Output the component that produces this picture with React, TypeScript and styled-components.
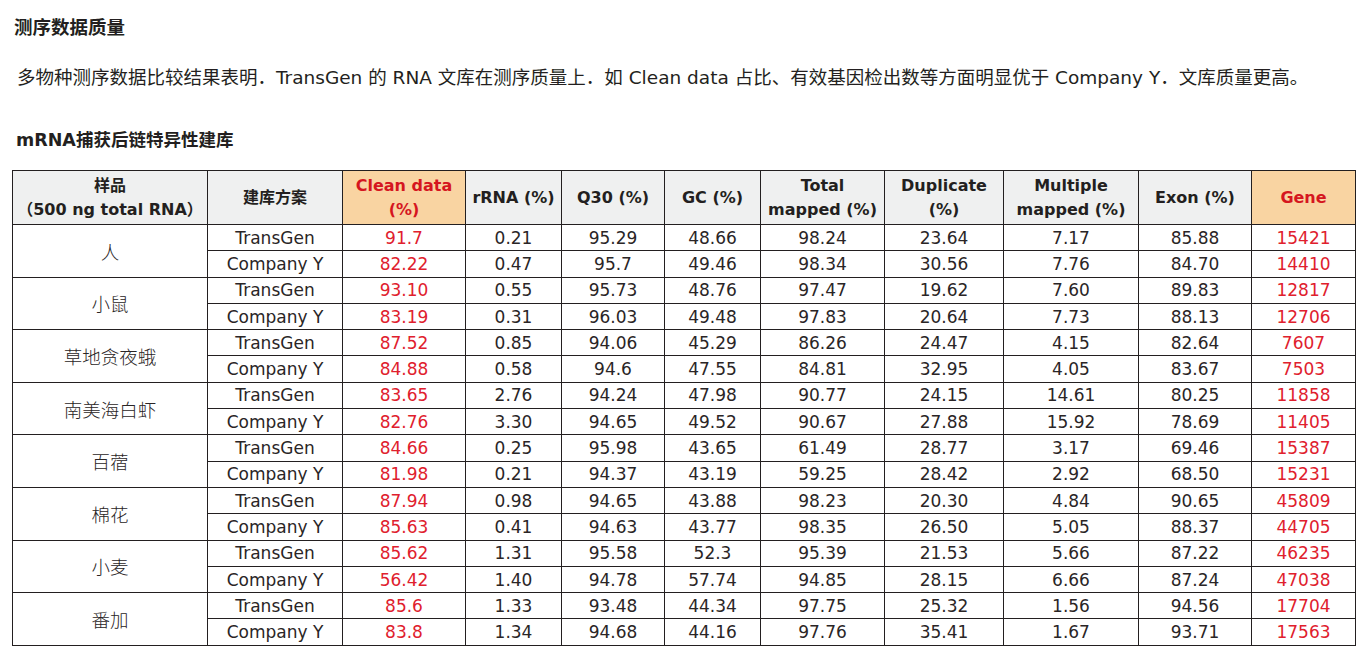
import React from "react";
import styled, { createGlobalStyle } from "styled-components";

const GlobalStyle = createGlobalStyle`
  html, body { margin: 0; padding: 0; background: #ffffff; }
  body { font-family: "DejaVu Sans", "Noto Sans CJK SC", sans-serif; color: #231f20; }
`;

const Page = styled.div`
  width: 1368px;
  height: 664px;
  box-sizing: border-box;
  padding: 14px 0 0 12px;
  display: flex;
  flex-direction: column;
  overflow: hidden;
`;

const Title = styled.h2`
  margin: 0 0 0 2px;
  font-family: "Noto Sans CJK SC", sans-serif;
  font-size: 18.5px;
  line-height: 24px;
  font-weight: 700;
  color: #231f20;
`;

const Paragraph = styled.p`
  margin: 28px 0 0 5px;
  font-family: "DejaVu Sans", "Noto Sans CJK SC", sans-serif;
  font-size: 18.5px;
  line-height: 24px;
  font-weight: 400;
  color: #231f20;
  white-space: nowrap;
`;

const SubTitle = styled.h3`
  margin: 38px 0 0 4px;
  font-family: "DejaVu Sans", "Noto Sans CJK SC", sans-serif;
  font-size: 17.5px;
  line-height: 24px;
  font-weight: 700;
  color: #231f20;
`;

const Table = styled.table`
  margin-top: 18px;
  border-collapse: collapse;
  table-layout: fixed;
  width: 1343px;
  font-family: "DejaVu Sans", "Noto Sans CJK SC", sans-serif;
`;

const HeadCell = styled.th<{ $accent?: boolean }>`
  height: 53px;
  padding: 0;
  border: 1px solid #231f20;
  background: ${(p) => (p.$accent ? "#f9d4a2" : "#eff0f0")};
  color: ${(p) => (p.$accent ? "#d5161f" : "#231f20")};
  font-size: 16px;
  line-height: 24px;
  font-weight: 700;
  text-align: center;
  vertical-align: middle;
`;

const Row = styled.tr`
  height: 26.3px;
`;

const Cell = styled.td<{ $red?: boolean }>`
  padding: 0;
  border: 1px solid #231f20;
  color: ${(p) => (p.$red ? "#e0202d" : "#2a2526")};
  font-size: 17px;
  line-height: 20px;
  text-align: center;
  vertical-align: middle;
  white-space: nowrap;
`;

const SampleCell = styled(Cell)`
  font-family: "Noto Sans CJK SC", sans-serif;
  font-size: 18.5px;
  font-weight: 300;
`;

type Vals = [string, string, string, string, string, string, string, string, string];

const data: { name: string; t: Vals; c: Vals }[] = [
  {
    name: "人",
    t: ["91.7", "0.21", "95.29", "48.66", "98.24", "23.64", "7.17", "85.88", "15421"],
    c: ["82.22", "0.47", "95.7", "49.46", "98.34", "30.56", "7.76", "84.70", "14410"],
  },
  {
    name: "小鼠",
    t: ["93.10", "0.55", "95.73", "48.76", "97.47", "19.62", "7.60", "89.83", "12817"],
    c: ["83.19", "0.31", "96.03", "49.48", "97.83", "20.64", "7.73", "88.13", "12706"],
  },
  {
    name: "草地贪夜蛾",
    t: ["87.52", "0.85", "94.06", "45.29", "86.26", "24.47", "4.15", "82.64", "7607"],
    c: ["84.88", "0.58", "94.6", "47.55", "84.81", "32.95", "4.05", "83.67", "7503"],
  },
  {
    name: "南美海白虾",
    t: ["83.65", "2.76", "94.24", "47.98", "90.77", "24.15", "14.61", "80.25", "11858"],
    c: ["82.76", "3.30", "94.65", "49.52", "90.67", "27.88", "15.92", "78.69", "11405"],
  },
  {
    name: "百蓿",
    t: ["84.66", "0.25", "95.98", "43.65", "61.49", "28.77", "3.17", "69.46", "15387"],
    c: ["81.98", "0.21", "94.37", "43.19", "59.25", "28.42", "2.92", "68.50", "15231"],
  },
  {
    name: "棉花",
    t: ["87.94", "0.98", "94.65", "43.88", "98.23", "20.30", "4.84", "90.65", "45809"],
    c: ["85.63", "0.41", "94.63", "43.77", "98.35", "26.50", "5.05", "88.37", "44705"],
  },
  {
    name: "小麦",
    t: ["85.62", "1.31", "95.58", "52.3", "95.39", "21.53", "5.66", "87.22", "46235"],
    c: ["56.42", "1.40", "94.78", "57.74", "94.85", "28.15", "6.66", "87.24", "47038"],
  },
  {
    name: "番加",
    t: ["85.6", "1.33", "93.48", "44.34", "97.75", "25.32", "1.56", "94.56", "17704"],
    c: ["83.8", "1.34", "94.68", "44.16", "97.76", "35.41", "1.67", "93.71", "17563"],
  },
];

const widths = [195, 135, 123, 96, 103, 96, 124, 119, 135, 113, 104];

const ValueCells: React.FC<{ vals: Vals }> = ({ vals }) => (
  <>
    {vals.map((v, i) => (
      <Cell key={i} $red={i === 0 || i === 8}>
        {v}
      </Cell>
    ))}
  </>
);

export default function App() {
  return (
    <>
      <GlobalStyle />
      <Page>
        <Title>测序数据质量</Title>
        <Paragraph>
          多物种测序数据比较结果表明．TransGen 的 RNA 文库在测序质量上．如 Clean data 占比、有效基因检出数等方面明显优于 Company Y．文库质量更高。
        </Paragraph>
        <SubTitle>mRNA捕获后链特异性建库</SubTitle>
        <Table>
          <colgroup>
            {widths.map((w, i) => (
              <col key={i} style={{ width: w }} />
            ))}
          </colgroup>
          <thead>
            <tr>
              <HeadCell>
                样品
                <br />
                （500 ng total RNA）
              </HeadCell>
              <HeadCell>建库方案</HeadCell>
              <HeadCell $accent>
                Clean data
                <br />
                (%)
              </HeadCell>
              <HeadCell>rRNA (%)</HeadCell>
              <HeadCell>Q30 (%)</HeadCell>
              <HeadCell>GC (%)</HeadCell>
              <HeadCell>
                Total
                <br />
                mapped (%)
              </HeadCell>
              <HeadCell>
                Duplicate
                <br />
                (%)
              </HeadCell>
              <HeadCell>
                Multiple
                <br />
                mapped (%)
              </HeadCell>
              <HeadCell>Exon (%)</HeadCell>
              <HeadCell $accent>Gene</HeadCell>
            </tr>
          </thead>
          <tbody>
            {data.map((s) => (
              <React.Fragment key={s.name}>
                <Row>
                  <SampleCell rowSpan={2}>{s.name}</SampleCell>
                  <Cell>TransGen</Cell>
                  <ValueCells vals={s.t} />
                </Row>
                <Row>
                  <Cell>Company Y</Cell>
                  <ValueCells vals={s.c} />
                </Row>
              </React.Fragment>
            ))}
          </tbody>
        </Table>
      </Page>
    </>
  );
}
